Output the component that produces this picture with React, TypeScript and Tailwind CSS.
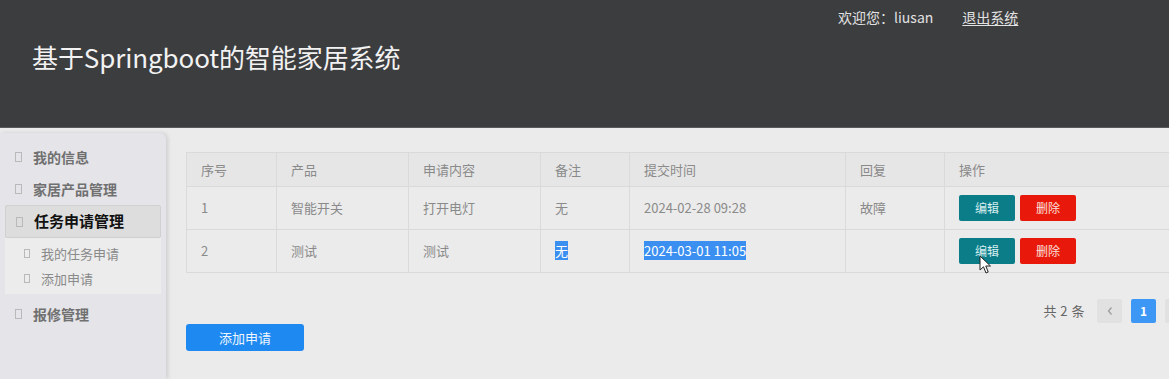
const FONT = '"Noto Sans CJK SC", "Open Sans", sans-serif';

const NavIcon = ({ small = false }: { small?: boolean }) => (
  <span
    className={`inline-block border border-[#b9b9b9] ${small ? "w-[6px] h-[9px]" : "w-[7px] h-[10px]"}`}
  />
);

const Cursor = () => (
  <svg width="14" height="20" viewBox="0 0 14 20" className="absolute left-[20px] top-[17px]">
    <path
      d="M1 1 L1 15 L4.5 11.8 L7 18 L9.2 17 L6.8 11 L11.5 11 Z"
      fill="#ffffff"
      stroke="#222"
      strokeWidth="1"
      strokeLinejoin="round"
    />
  </svg>
);

const Chevron = ({ dir }: { dir: "left" | "right" }) => (
  <svg width="8" height="10" viewBox="0 0 8 10">
    <path
      d={dir === "left" ? "M5.5 1.5 L2.5 5 L5.5 8.5" : "M2.5 1.5 L5.5 5 L2.5 8.5"}
      fill="none"
      stroke="#9a9a9a"
      strokeWidth="1.2"
    />
  </svg>
);

export default function App() {
  const rows = [
    { id: "1", product: "智能开关", content: "打开电灯", note: "无", time: "2024-02-28 09:28", reply: "故障", selected: false },
    { id: "2", product: "测试", content: "测试", note: "无", time: "2024-03-01 11:05", reply: "", selected: true },
  ];

  return (
    <div className="w-[1169px] h-[379px] overflow-hidden bg-[#ebebeb] flex flex-col" style={{ fontFamily: FONT }}>
      <header className="h-[128px] shrink-0 bg-[#3c3d3f] border-b border-[#5a5a5c] relative">
        <div className="absolute left-[838px] top-[7px] flex items-center text-[14px] text-[#e2e2e2]">
          <span>欢迎您：liusan</span>
          <a className="ml-[29px] underline underline-offset-2">退出系统</a>
        </div>
        <h1 className="pl-[32px] pt-[38px] text-[26px] leading-[38px] text-[#f2f2f2] tracking-[-0.1px]">
          基于Springboot的智能家居系统
        </h1>
      </header>

      <div className="flex flex-1 min-h-0">
        <aside className="w-[166px] shrink-0 mt-[5px] bg-[#e5e4e9] rounded-tr-[6px] shadow-[2px_0_4px_rgba(0,0,0,0.12)] pt-[14px]">
          <div className="flex items-center gap-[11px] pl-[15px] h-[20px] text-[14px] font-bold text-[#707070]">
            <NavIcon />
            <span>我的信息</span>
          </div>
          <div className="flex items-center gap-[11px] pl-[15px] h-[20px] mt-[12px] text-[14px] font-bold text-[#707070]">
            <NavIcon />
            <span>家居产品管理</span>
          </div>
          <div className="mx-[5px] mt-[6px] h-[33px] flex items-center gap-[11px] pl-[10px] bg-[#dddddd] border border-[#d0d0d0] rounded-[2px] text-[15px] font-bold text-[#111]">
            <NavIcon />
            <span>任务申请管理</span>
          </div>
          <div className="mx-[5px] bg-[#ececec] py-[3px]">
            <div className="flex items-center gap-[11px] pl-[19px] h-[25px] text-[13px] text-[#8a8a8a]">
              <NavIcon small />
              <span>我的任务申请</span>
            </div>
            <div className="flex items-center gap-[11px] pl-[19px] h-[25px] text-[13px] text-[#8a8a8a]">
              <NavIcon small />
              <span>添加申请</span>
            </div>
          </div>
          <div className="flex items-center gap-[11px] pl-[15px] h-[20px] mt-[10px] text-[14px] font-bold text-[#707070]">
            <NavIcon />
            <span>报修管理</span>
          </div>
        </aside>

        <main className="flex-1 min-w-0 pl-[20px] pt-[24px]">
          <div className="w-[1004px]">
            <table className="w-full table-fixed border-collapse text-[13px] text-[#8a8a8a]">
              <colgroup>
                <col className="w-[90px]" />
                <col className="w-[132px]" />
                <col className="w-[132px]" />
                <col className="w-[89px]" />
                <col className="w-[216px]" />
                <col className="w-[99px]" />
                <col />
              </colgroup>
              <thead>
                <tr className="h-[34px] bg-[#e6e6e6]">
                  {["序号", "产品", "申请内容", "备注", "提交时间", "回复", "操作"].map((h) => (
                    <th key={h} className="border border-[#dadada] text-left font-normal pl-[14px]">
                      {h}
                    </th>
                  ))}
                </tr>
              </thead>
              <tbody>
                {rows.map((r) => (
                  <tr key={r.id} className="h-[43px] bg-[#ebebeb]">
                    <td className="border border-[#dadada] pl-[14px]">{r.id}</td>
                    <td className="border border-[#dadada] pl-[14px]">{r.product}</td>
                    <td className="border border-[#dadada] pl-[14px]">{r.content}</td>
                    <td className="border border-[#dadada] pl-[14px]">
                      <span className={r.selected ? "bg-[#3b8ff0] text-white" : ""}>{r.note}</span>
                    </td>
                    <td className="border border-[#dadada] pl-[14px]">
                      <span className={r.selected ? "bg-[#3b8ff0] text-white" : ""}>{r.time}</span>
                    </td>
                    <td className="border border-[#dadada] pl-[14px]">{r.reply}</td>
                    <td className="border border-[#dadada] pl-[14px]">
                      <div className="flex items-center gap-[5px]">
                        <button className="relative w-[56px] h-[26px] rounded-[2px] bg-[#0b7d88] text-[12px] text-[#d8eef0]">
                          编辑
                          {r.selected && <Cursor />}
                        </button>
                        <button className="w-[56px] h-[26px] rounded-[2px] bg-[#e8190b] text-[12px] text-[#fbe0dc]">
                          删除
                        </button>
                      </div>
                    </td>
                  </tr>
                ))}
              </tbody>
            </table>

            <div className="mt-[26px] h-[24px] flex items-center justify-end text-[13px] text-[#666]">
              <span className="mr-[12px] tracking-[0.5px]">共 2 条</span>
              <span className="w-[25px] h-[24px] flex items-center justify-center bg-[#e1e1e1] rounded-[2px]">
                <Chevron dir="left" />
              </span>
              <span className="ml-[9px] w-[25px] h-[24px] flex items-center justify-center bg-[#3d97f5] text-white font-bold text-[12px] rounded-[2px]">
                1
              </span>
              <span className="ml-[9px] w-[25px] h-[24px] flex items-center justify-center bg-[#e1e1e1] rounded-[2px]">
                <Chevron dir="right" />
              </span>
            </div>

            <button className="mt-[1px] w-[118px] h-[27px] rounded-[3px] bg-[#1e89f0] text-[13px] text-[#eef6ff]">
              添加申请
            </button>
          </div>
        </main>
      </div>
    </div>
  );
}
